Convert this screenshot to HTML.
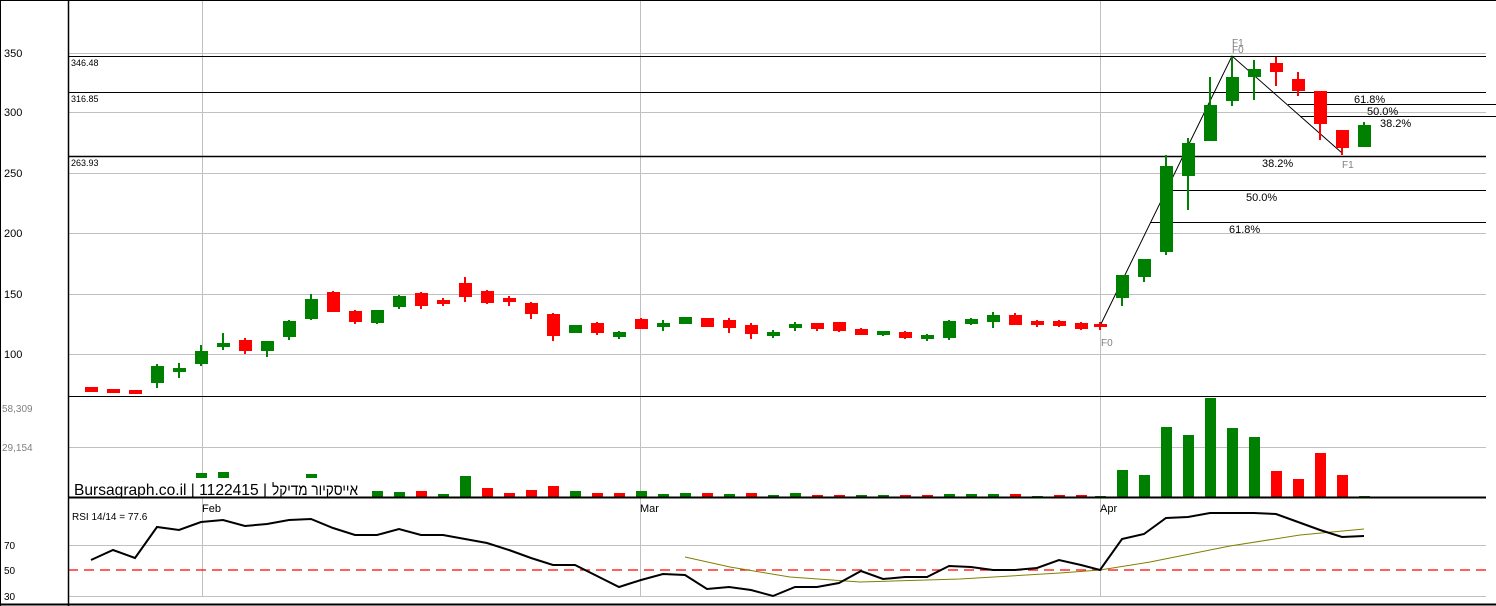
<!DOCTYPE html><html><head><style>body{margin:0;background:#fff}svg{display:block;font-family:"Liberation Sans",sans-serif}</style></head><body>
<svg width="1496" height="606" xmlns="http://www.w3.org/2000/svg">
<rect width="1496" height="606" fill="#fff"/>
<g stroke="#c0c0c0" stroke-width="1">
<line x1="68" y1="53.5" x2="1486" y2="53.5"/><line x1="68" y1="112.5" x2="1486" y2="112.5"/><line x1="68" y1="173.5" x2="1486" y2="173.5"/><line x1="68" y1="233.5" x2="1486" y2="233.5"/><line x1="68" y1="294.5" x2="1486" y2="294.5"/><line x1="68" y1="354.5" x2="1486" y2="354.5"/>
<line x1="68" y1="447.5" x2="1486" y2="447.5"/>
<line x1="68" y1="545.5" x2="1486" y2="545.5"/><line x1="68" y1="596.5" x2="1486" y2="596.5"/>
<line x1="202.5" y1="0" x2="202.5" y2="596"/><line x1="640.5" y1="0" x2="640.5" y2="596"/><line x1="1100.5" y1="0" x2="1100.5" y2="596"/>
</g>
<line x1="68" y1="570" x2="1486" y2="570" stroke="#f00" stroke-width="1.3" stroke-dasharray="10,6"/>
<g stroke="#000" stroke-width="1">
<line x1="68" y1="56.5" x2="1486" y2="56.5"/><line x1="68" y1="92.5" x2="1486" y2="92.5"/><line x1="68" y1="156.5" x2="1486" y2="156.5" stroke-width="1.5"/>
<line x1="1288" y1="104.5" x2="1496" y2="104.5"/><line x1="1300" y1="116.5" x2="1496" y2="116.5"/>
<line x1="1166" y1="190.5" x2="1486" y2="190.5"/><line x1="1150" y1="222.5" x2="1486" y2="222.5"/>
<line x1="68" y1="396.5" x2="1486" y2="396.5"/>
<polyline points="1100,326 1232,56 1342,153" fill="none"/>
</g>
<g stroke-width="2">
<g stroke="#f00" fill="#f00">
<line x1="91" y1="387" x2="91" y2="392"/><rect x="86" y="388" width="11" height="3"/>
<line x1="113" y1="389" x2="113" y2="393"/><rect x="108" y="390" width="11" height="2"/>
<line x1="135" y1="390" x2="135" y2="394"/><rect x="130" y="391" width="11" height="2"/>
<line x1="245" y1="338" x2="245" y2="354"/><rect x="240" y="341" width="11" height="9"/>
<line x1="333" y1="291" x2="333" y2="312"/><rect x="328" y="293" width="11" height="18"/>
<line x1="355" y1="310" x2="355" y2="324"/><rect x="350" y="312" width="11" height="9"/>
<line x1="421" y1="292" x2="421" y2="309"/><rect x="416" y="294" width="11" height="11"/>
<line x1="443" y1="298" x2="443" y2="306"/><rect x="438" y="301" width="11" height="2"/>
<line x1="465" y1="277" x2="465" y2="302"/><rect x="460" y="284" width="11" height="12"/>
<line x1="487" y1="290" x2="487" y2="304"/><rect x="482" y="292" width="11" height="10"/>
<line x1="509" y1="296" x2="509" y2="306"/><rect x="504" y="299" width="11" height="2"/>
<line x1="531" y1="302" x2="531" y2="319"/><rect x="526" y="304" width="11" height="9"/>
<line x1="553" y1="313" x2="553" y2="341"/><rect x="548" y="315" width="11" height="20"/>
<line x1="597" y1="322" x2="597" y2="335"/><rect x="592" y="324" width="11" height="8"/>
<line x1="641" y1="318" x2="641" y2="329"/><rect x="636" y="320" width="11" height="8"/>
<line x1="707" y1="318" x2="707" y2="327"/><rect x="702" y="319" width="11" height="7"/>
<line x1="729" y1="318" x2="729" y2="333"/><rect x="724" y="321" width="11" height="6"/>
<line x1="751" y1="323" x2="751" y2="339"/><rect x="746" y="326" width="11" height="7"/>
<line x1="817" y1="323" x2="817" y2="331"/><rect x="812" y="324" width="11" height="4"/>
<line x1="839" y1="322" x2="839" y2="332"/><rect x="834" y="323" width="11" height="7"/>
<line x1="861" y1="328" x2="861" y2="335"/><rect x="856" y="330" width="11" height="4"/>
<line x1="905" y1="331" x2="905" y2="339"/><rect x="900" y="333" width="11" height="4"/>
<line x1="1015" y1="313" x2="1015" y2="325"/><rect x="1010" y="316" width="11" height="8"/>
<line x1="1037" y1="320" x2="1037" y2="327"/><rect x="1032" y="322" width="11" height="2"/>
<line x1="1059" y1="320" x2="1059" y2="327"/><rect x="1054" y="322" width="11" height="3"/>
<line x1="1081" y1="322" x2="1081" y2="330"/><rect x="1076" y="324" width="11" height="4"/>
<line x1="1100" y1="322" x2="1100" y2="330"/><rect x="1095" y="325" width="11" height="1"/>
<line x1="1276" y1="57" x2="1276" y2="86"/><rect x="1271" y="64" width="11" height="7"/>
<line x1="1298" y1="72" x2="1298" y2="96"/><rect x="1293" y="80" width="11" height="10"/>
<line x1="1320" y1="92" x2="1320" y2="140"/><rect x="1315" y="92" width="11" height="31"/>
<line x1="1342" y1="131" x2="1342" y2="155"/><rect x="1337" y="131" width="11" height="16"/>
</g>
<g stroke="#008000" fill="#008000">
<line x1="157" y1="364" x2="157" y2="388"/><rect x="152" y="367" width="11" height="15"/>
<line x1="179" y1="363" x2="179" y2="378"/><rect x="174" y="369" width="11" height="2"/>
<line x1="201" y1="345" x2="201" y2="366"/><rect x="196" y="352" width="11" height="11"/>
<line x1="223" y1="333" x2="223" y2="350"/><rect x="218" y="344" width="11" height="2"/>
<line x1="267" y1="342" x2="267" y2="357"/><rect x="262" y="342" width="11" height="8"/>
<line x1="289" y1="320" x2="289" y2="340"/><rect x="284" y="322" width="11" height="14"/>
<line x1="311" y1="294" x2="311" y2="320"/><rect x="306" y="300" width="11" height="18"/>
<line x1="377" y1="310" x2="377" y2="324"/><rect x="372" y="311" width="11" height="11"/>
<line x1="399" y1="295" x2="399" y2="309"/><rect x="394" y="297" width="11" height="9"/>
<line x1="575" y1="325" x2="575" y2="333"/><rect x="570" y="326" width="11" height="6"/>
<line x1="619" y1="331" x2="619" y2="339"/><rect x="614" y="333" width="11" height="3"/>
<line x1="663" y1="320" x2="663" y2="331"/><rect x="658" y="324" width="11" height="2"/>
<line x1="685" y1="317" x2="685" y2="324"/><rect x="680" y="318" width="11" height="5"/>
<line x1="773" y1="330" x2="773" y2="338"/><rect x="768" y="333" width="11" height="2"/>
<line x1="795" y1="322" x2="795" y2="331"/><rect x="790" y="325" width="11" height="2"/>
<line x1="883" y1="331" x2="883" y2="336"/><rect x="878" y="332" width="11" height="2"/>
<line x1="927" y1="334" x2="927" y2="341"/><rect x="922" y="336" width="11" height="2"/>
<line x1="949" y1="320" x2="949" y2="340"/><rect x="944" y="322" width="11" height="15"/>
<line x1="971" y1="318" x2="971" y2="325"/><rect x="966" y="320" width="11" height="3"/>
<line x1="993" y1="312" x2="993" y2="328"/><rect x="988" y="316" width="11" height="5"/>
<line x1="1122" y1="276" x2="1122" y2="306"/><rect x="1117" y="276" width="11" height="21"/>
<line x1="1144" y1="260" x2="1144" y2="282"/><rect x="1139" y="260" width="11" height="16"/>
<line x1="1166" y1="155" x2="1166" y2="255"/><rect x="1161" y="167" width="11" height="84"/>
<line x1="1188" y1="138" x2="1188" y2="210"/><rect x="1183" y="144" width="11" height="31"/>
<line x1="1210" y1="77" x2="1210" y2="140"/><rect x="1205" y="106" width="11" height="34"/>
<line x1="1232" y1="57" x2="1232" y2="106"/><rect x="1227" y="78" width="11" height="22"/>
<line x1="1254" y1="60" x2="1254" y2="100"/><rect x="1249" y="70" width="11" height="6"/>
<line x1="1364" y1="122" x2="1364" y2="146"/><rect x="1359" y="126" width="11" height="20"/>
</g>
</g>
<g fill="#008000">
<rect x="152" y="478" width="11" height="1"/><rect x="196" y="473" width="11" height="24"/><rect x="218" y="472" width="11" height="25"/><rect x="306" y="474" width="11" height="23"/><rect x="372" y="491" width="11" height="6"/><rect x="394" y="492" width="11" height="5"/><rect x="438" y="494" width="11" height="3"/><rect x="460" y="476" width="11" height="21"/><rect x="570" y="491" width="11" height="6"/><rect x="636" y="491" width="11" height="6"/><rect x="658" y="494" width="11" height="3"/><rect x="680" y="493" width="11" height="4"/><rect x="724" y="494" width="11" height="3"/><rect x="768" y="495" width="11" height="2"/><rect x="790" y="493" width="11" height="4"/><rect x="856" y="495" width="11" height="2"/><rect x="878" y="495" width="11" height="2"/><rect x="944" y="494" width="11" height="3"/><rect x="966" y="494" width="11" height="3"/><rect x="988" y="494" width="11" height="3"/><rect x="1032" y="496" width="11" height="1"/><rect x="1095" y="496" width="11" height="1"/><rect x="1117" y="470" width="11" height="27"/><rect x="1139" y="475" width="11" height="22"/><rect x="1161" y="427" width="11" height="70"/><rect x="1183" y="435" width="11" height="62"/><rect x="1205" y="398" width="11" height="99"/><rect x="1227" y="428" width="11" height="69"/><rect x="1249" y="437" width="11" height="60"/><rect x="1359" y="496" width="11" height="1"/>
</g>
<g fill="#f00">
<rect x="416" y="491" width="11" height="6"/><rect x="482" y="488" width="11" height="9"/><rect x="504" y="493" width="11" height="4"/><rect x="526" y="490" width="11" height="7"/><rect x="548" y="486" width="11" height="11"/><rect x="592" y="493" width="11" height="4"/><rect x="614" y="493" width="11" height="4"/><rect x="702" y="493" width="11" height="4"/><rect x="746" y="493" width="11" height="4"/><rect x="812" y="495" width="11" height="2"/><rect x="834" y="495" width="11" height="2"/><rect x="900" y="495" width="11" height="2"/><rect x="922" y="495" width="11" height="2"/><rect x="1010" y="494" width="11" height="3"/><rect x="1054" y="495" width="11" height="2"/><rect x="1076" y="495" width="11" height="2"/><rect x="1271" y="471" width="11" height="26"/><rect x="1293" y="479" width="11" height="18"/><rect x="1315" y="453" width="11" height="44"/><rect x="1337" y="475" width="11" height="22"/>
</g>
<rect x="70" y="478" width="290" height="19" fill="#fff"/>
<text x="74" y="495" font-size="16" fill="#000" textLength="193" lengthAdjust="spacingAndGlyphs">Bursagraph.co.il | 1122415 |</text>
<text x="272" y="495" font-size="16" fill="#000" textLength="86" lengthAdjust="spacingAndGlyphs" font-family="Liberation Sans, DejaVu Sans, sans-serif">אייסקיור מדיקל</text>
<line x1="68" y1="497.5" x2="1486" y2="497.5" stroke="#000" stroke-width="2"/>
<polyline fill="none" stroke="#808000" stroke-width="1" points="685,557 730,567 790,577 860,582 960,579 1060,573 1100,570 1150,562 1230,546 1300,535 1364,529"/>
<polyline fill="none" stroke="#000" stroke-width="2" points="91,560 113,550 135,558 157,527 179,530 201,522 223,520 245,526 267,524 289,520 311,519 333,528 355,535 377,535 399,529 421,535 443,535 465,539 487,543 509,550 531,558 553,565 575,565 597,576 619,587 641,580 663,574 685,575 707,589 729,587 751,590 773,596 795,587 817,587 839,583 861,571 883,579 905,577 927,577 949,566 971,567 993,570 1015,570 1037,568 1059,560 1081,565 1100,570 1122,539 1144,534 1166,518 1188,517 1210,513 1232,513 1254,513 1276,514 1298,522 1320,530 1342,537 1364,536"/>
<g stroke="#000">
<line x1="68.5" y1="0" x2="68.5" y2="606" stroke-width="1.5"/>
<line x1="0.5" y1="0" x2="0.5" y2="606"/>
<line x1="0" y1="0.5" x2="1496" y2="0.5"/>
<line x1="0" y1="604.5" x2="1496" y2="604.5" stroke-width="2"/>
</g>
<g font-size="11" fill="#000">
<text x="4" y="57">350</text><text x="4" y="116">300</text><text x="4" y="177">250</text><text x="4" y="237">200</text><text x="4" y="298">150</text><text x="4" y="358">100</text>
<text x="4" y="549" font-size="10">70</text><text x="4" y="574" font-size="10">50</text><text x="4" y="600" font-size="10">30</text>
<text x="2" y="412" font-size="10" fill="#808080">58,309</text><text x="2" y="451" font-size="10" fill="#808080">29,154</text>
<text x="71" y="66" font-size="9">346.48</text><text x="71" y="102" font-size="9">316.85</text><text x="71" y="166" font-size="9">263.93</text>
<text x="202" y="512">Feb</text><text x="640" y="512">Mar</text><text x="1100" y="512">Apr</text>
<text x="72" y="520" font-size="10">RSI 14/14 = 77.6</text>
<text x="1354" y="103">61.8%</text><text x="1367" y="115">50.0%</text><text x="1380" y="127">38.2%</text>
<text x="1262" y="167">38.2%</text><text x="1246" y="201">50.0%</text><text x="1229" y="233">61.8%</text>
</g>
<g font-size="10" fill="#808080">
<text x="1232" y="46">F1</text><text x="1232" y="53">F0</text><text x="1342" y="168">F1</text><text x="1101" y="346">F0</text>
</g>
</svg>
</body></html>
